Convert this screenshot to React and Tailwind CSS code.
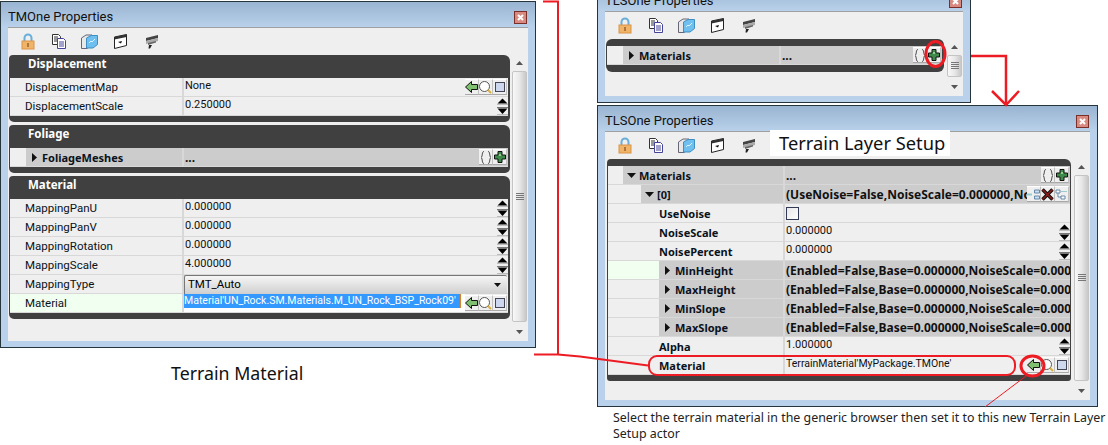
import React from 'react';

const UI_FONT = "font-['Roboto',sans-serif]";
const BOLD_FONT = "font-['Noto_Sans',sans-serif] font-bold";
const BOLD_VALUE = "font-['Noto_Sans',sans-serif] font-bold text-[12px] leading-[20px]";

// toolbar icons
const LockIcon = () => (
  <svg width="14" height="17" viewBox="0 0 14 17">
    <path d="M3.500 8V5a3.500 3.500 0 0 1 7 0v3" fill="none" stroke="#6aaedc" strokeWidth="2" />
    <rect x="1" y="8" width="12" height="8" fill="#f0b468" stroke="#dc9448" />
    <rect x="6" y="10" width="2" height="4" fill="#b0763a" />
  </svg>
);

const CopyIcon = () => (
  <svg width="16" height="15" viewBox="0 0 16 15">
    <path d="M1.500.5h6l2 2v8h-8z" fill="#fff" stroke="#333" />
    <path d="M3 3h4M3 5h4M3 7h4" stroke="#333" />
    <path d="M6.500 4.500h6l2 2v8h-8z" fill="#fff" stroke="#44449a" />
    <path d="M8 8h5M8 10h5M8 12h5" stroke="#44449a" />
  </svg>
);

const CubeIcon = () => (
  <svg width="17" height="15" viewBox="0 0 17 15">
    <path d="M.5 4 5 1h6v10l-5 3.500H.5z" fill="#e8e8e8" stroke="#667" />
    <path d="M5.500 4 10 1.500h6.500v9L12 14H5.500z" fill="#6fc0ee" stroke="#3d8fc4" />
    <path d="M8 9l2-2 1 1 3-3" fill="none" stroke="#d8f2ff" />
  </svg>
);

const BoxIcon = () => (
  <svg width="13" height="15" viewBox="0 0 13 15">
    <path d="M.5 3 12.500.5v11L.5 14.500z" fill="#fff" stroke="#222" />
    <path d="M.5 3 12.500.5V3L.5 5.500z" fill="#333" />
    <path d="M4 8l4-1-1 2.500z" fill="#111" />
  </svg>
);

const FilmIcon = () => (
  <svg width="14" height="14" viewBox="0 0 14 14">
    <path d="M1 3 13 0v3L1 6z" fill="#444" />
    <path d="M1 6 13 3v3L1 9z" fill="#aaa" />
    <path d="M3 8 11 6v1.500L3 10z" fill="#666" />
    <path d="M4 10h3l-2 3.500H3.500z" fill="#222" />
  </svg>
);

// row button icons
const IconBtn = ({ children }) => (
  <span className="w-[14px] h-[16px] shrink-0 flex items-center justify-center bg-[#efefef] border-t border-t-white border-b border-b-[#a8a8a8] border-r border-r-[#c0c0c0]">
    {children}
  </span>
);

const ArrowBtn = () => (
  <IconBtn>
    <svg className="shrink-0" width="13" height="12" viewBox="0 0 13 12">
      <path d="M.5 6 6.500.5v3h6v5h-6v3z" fill="#7fbf70" stroke="#111" />
    </svg>
  </IconBtn>
);

const FindBtn = () => (
  <IconBtn>
    <svg className="shrink-0" width="13" height="13" viewBox="0 0 13 13">
      <circle cx="5.500" cy="5.500" r="5" fill="#fff" stroke="#555" />
      <path d="M9 9l3 3" stroke="#d8b040" strokeWidth="2" />
    </svg>
  </IconBtn>
);

const ClearBtn = () => (
  <IconBtn>
    <span className="block w-[10px] h-[10px] bg-[#cdd8ee] border border-[#445]" />
  </IconBtn>
);

const BracesBtn = () => (
  <IconBtn>
    <svg className="shrink-0" width="12" height="13" viewBox="0 0 12 13">
      <path d="M4 .5C1.500.5 3 5.500 1 6.500c2 1 .5 6 3 6M8 .5c2.500 0 1 5 3 6-2 1-.5 6-3 6" fill="none" stroke="#444" />
    </svg>
  </IconBtn>
);

const PlusBtn = () => (
  <IconBtn>
    <svg className="shrink-0" width="12" height="12" viewBox="0 0 12 12">
      <path d="M4 .5h4V4h3.500v4H8v3.500H4V8H.5V4H4z" fill="#3f8a4a" stroke="#111" />
      <path d="M5 3h2v2H5z" fill="#8ed08f" />
    </svg>
  </IconBtn>
);

const InsertBtn = () => (
  <IconBtn>
    <svg className="shrink-0" width="13" height="11" viewBox="0 0 13 11">
      <path d="M0 5.500h5" stroke="#9cc" strokeWidth="2" />
      <path d="M7.500 1h5v3h-5zM7.500 7h5v3h-5z" fill="#cde" stroke="#68a" />
    </svg>
  </IconBtn>
);

const DeleteBtn = () => (
  <IconBtn>
    <svg className="shrink-0" width="13" height="13" viewBox="0 0 13 13">
      <path d="M1.500 1.500l10 10M11.500 1.500l-10 10" stroke="#111" strokeWidth="3.500" />
      <path d="M1.500 1.500l10 10M11.500 1.500l-10 10" stroke="#8a1c1c" strokeWidth="1.500" />
    </svg>
  </IconBtn>
);

const DupBtn = () => (
  <IconBtn>
    <svg className="shrink-0" width="13" height="11" viewBox="0 0 13 11">
      <path d="M1 1h4v3H1zM3 4v4h3M6 7h4v3H6z" fill="#fff" stroke="#68a" />
      <path d="M6 2.500h6" stroke="#9cc" />
    </svg>
  </IconBtn>
);

const Spinner = () => (
  <svg className="shrink-0" width="11" height="19" viewBox="0 0 11 19">
    <path d="M5.500 1.500 10.500 6.500H.5z" fill="#000" />
    <path d="M0 7.500h11M0 17.500h11" stroke="#bbb" />
    <path d="M.5 11.500h10l-5 5.500z" fill="#000" />
    <path d="M0 10.500h11" stroke="#777" />
  </svg>
);

const Tri = ({ down }) =>
  down ? (
    <svg className="shrink-0" width="9" height="5" viewBox="0 0 9 5"><path d="M0 0h9L4.500 5z" fill="#111" /></svg>
  ) : (
    <svg className="shrink-0" width="5" height="9" viewBox="0 0 5 9"><path d="M0 0l5 4.500L0 9z" fill="#111" /></svg>
  );

// one property row, label cell + value cell
const Row = ({ label, value, labelW, group, bold, indent = '', tri, triDown, triBox = '', right, green, valueClass = '', children }) => (
  <div className={`h-[19px] flex shrink-0 border-b border-[#d8d8d8] bg-[#efefef] ${UI_FONT}`}>
    <div className={`${labelW} shrink-0 flex ${green ? 'bg-[#f0fff0]' : ''} border-r-2 border-[#d8d8d8]`}>
      <div className={`${indent} shrink-0`} />
      <div className={`flex-1 flex items-center min-w-0 ${group ? 'bg-[#cccccc]' : ''}`}>
        {tri && <div className={`${triBox} shrink-0 flex justify-center`}><Tri down={triDown} /></div>}
        <span className={`leading-[19px] pt-px whitespace-nowrap text-[#0a1220] ${bold ? `text-[11px] ${BOLD_FONT}` : 'text-[11.500px]'}`}>{label}</span>
      </div>
    </div>
    <div className={`flex-1 min-w-0 flex items-center ${group ? 'bg-[#cccccc]' : ''}`}>
      {children || (
        <span className={`flex-1 min-w-0 overflow-hidden whitespace-nowrap pl-px self-start text-[#111] ${valueClass || 'text-[11px] leading-[16px]'}`}>{value}</span>
      )}
      {right}
    </div>
  </div>
);

const PickerBtns = () => (
  <div className="flex shrink-0 pr-px">
    <ArrowBtn />
    <FindBtn />
    <ClearBtn />
  </div>
);

const ArrayBtns = () => (
  <div className="flex shrink-0 pr-px">
    <BracesBtn />
    <PlusBtn />
  </div>
);

const Category = ({ title, children }) => (
  <div className="bg-[#404040] rounded-tr-[6px] rounded-tl-[4px] rounded-b-[5px] pl-px pr-[2px] pb-[6px]">
    <div className={`h-[23px] text-white text-[11.500px] leading-[17px] pl-[18px] ${BOLD_FONT}`}>{title}</div>
    {children}
  </div>
);

const Scrollbar = () => (
  <div className="w-[15px] shrink-0 flex flex-col">
    <div className="h-[16px] shrink-0 flex items-center justify-center">
      <svg width="7" height="4" viewBox="0 0 7 4"><path d="M3.500 0 7 4H0z" fill="#555" /></svg>
    </div>
    <div className="flex-1 flex items-center justify-center rounded-[2px] border border-[#c4c4c4] bg-gradient-to-r from-[#f8f8f8] via-[#e8e8e8] to-[#c8c8c8]">
      <svg width="8" height="8" viewBox="0 0 8 8"><path d="M0 .5h8M0 2.500h8M0 4.500h8M0 6.500h8" stroke="#777" /></svg>
    </div>
    <div className="h-[19px] shrink-0 flex items-center justify-center">
      <svg width="7" height="4" viewBox="0 0 7 4"><path d="M0 0h7L3.500 4z" fill="#555" /></svg>
    </div>
  </div>
);

const Toolbar = () => (
  <div className="h-[27px] shrink-0 flex items-center pl-[4px]">
    <span className="w-[31px] flex justify-center"><LockIcon /></span>
    <span className="w-[31px] flex justify-center"><CopyIcon /></span>
    <span className="w-[31px] flex justify-center"><CubeIcon /></span>
    <span className="w-[31px] flex justify-center"><BoxIcon /></span>
    <span className="w-[31px] flex justify-center"><FilmIcon /></span>
  </div>
);

const Win = ({ title, className, children, panelClass = 'pl-px' }) => (
  <div className={`absolute flex flex-col border border-[#26343c] bg-[#b9d1ea] ${className}`}>
    <div className={`h-[25px] shrink-0 flex items-center pl-[7px] pr-[8px] bg-gradient-to-b from-[#99b4d1] to-[#b9d1ea] text-[13px] text-[#111] ${UI_FONT}`}>
      <span className="pt-[5px]">{title}</span>
      <span className="ml-auto mt-[6px] w-[13px] h-[13px] flex items-center justify-center bg-[#d98a80] border border-[#7a3028] text-white">
        <svg width="7" height="7" viewBox="0 0 7 7"><path d="M1 1l5 5M6 1 1 6" stroke="#fff" strokeWidth="2" /></svg>
      </span>
    </div>
    <div className="flex-1 min-h-0 mx-[7px] mb-[6px] flex flex-col bg-[#efefef] border-t border-[#a0a0a0]">
      <Toolbar />
      <div className={`flex-1 min-h-0 flex gap-[2px] pr-px ${panelClass}`}>
        <div className="flex-1 min-w-0 flex flex-col gap-[3px]">{children}</div>
        <Scrollbar />
      </div>
    </div>
  </div>
);

const L1 = 'w-[174px]';
const L3 = 'w-[177px]';

const TerrainMaterialWindow = () => (
  <Win title="TMOne Properties" className="left-0 top-px w-[536px] h-[347px]">
    <Category title="Displacement">
      <Row labelW={L1} indent="w-[15px]" label="DisplacementMap" value="None" right={<PickerBtns />} />
      <Row labelW={L1} indent="w-[15px]" label="DisplacementScale" value="0.250000" right={<Spinner />} />
    </Category>
    <Category title="Foliage">
      <Row labelW={L1} indent="w-[16px]" group bold tri triBox="w-[16px]" label="FoliageMeshes" value="..." valueClass={BOLD_VALUE} right={<ArrayBtns />} />
    </Category>
    <Category title="Material">
      <Row labelW={L1} indent="w-[15px]" label="MappingPanU" value="0.000000" right={<Spinner />} />
      <Row labelW={L1} indent="w-[15px]" label="MappingPanV" value="0.000000" right={<Spinner />} />
      <Row labelW={L1} indent="w-[15px]" label="MappingRotation" value="0.000000" right={<Spinner />} />
      <Row labelW={L1} indent="w-[15px]" label="MappingScale" value="4.000000" right={<Spinner />} />
      <Row labelW={L1} indent="w-[15px]" label="MappingType">
        <div className="flex-1 h-[19px] flex items-center justify-between pl-[3px] pr-[6px] mr-px rounded-t-[2px] border-t border-l border-[#777] bg-gradient-to-b from-[#f6f6f6] to-[#cfcfcf] text-[11.500px]">
          <span className="pt-px">TMT_Auto</span>
          <svg width="7" height="4" viewBox="0 0 7 4"><path d="M0 0h7L3.500 4z" fill="#111" /></svg>
        </div>
      </Row>
      <Row labelW={L1} indent="w-[15px]" green label="Material" right={<PickerBtns />}>
        <div className="flex-1 min-w-0 h-[18px] flex items-start bg-white text-[10.500px] leading-[14px]">
          <span className="bg-[#3399ff] text-white whitespace-nowrap w-[277px] border-r border-[#e08020]">Material'UN_Rock.SM.Materials.M_UN_Rock_BSP_Rock09'</span>
        </div>
      </Row>
    </Category>
  </Win>
);

const LayerSmallWindow = () => (
  <Win title="TLSOne Properties" className="left-[597px] -top-[15px] w-[374px] h-[118px]">
    <div className="bg-[#404040] rounded-[6px] pl-px pr-[2px] pt-[7px] pb-[7px] mr-px">
      <Row labelW={L1} indent="w-[16px]" group bold tri triBox="w-[16px]" label="Materials" value="..." valueClass={BOLD_VALUE} right={<ArrayBtns />} />
    </div>
  </Win>
);

const LayerWindow = () => (
  <Win title="TLSOne Properties" className="left-[597px] top-[105px] w-[501px] h-[302px]" panelClass="pl-[2px]">
    <div className="bg-[#404040] rounded-tr-[6px] rounded-tl-[4px] rounded-b-[3px] pl-px pr-[1px] pt-[7px] pb-[6px] mr-px">
      <Row labelW={L3} indent="w-[15px]" group bold tri triDown triBox="w-[16px]" label="Materials" value="..." valueClass={BOLD_VALUE} right={<ArrayBtns />} />
      <Row labelW={L3} indent="w-[33px]" group bold tri triDown triBox="w-[16px]" label="[0]" value="(UseNoise=False,NoiseScale=0.000000,NoisePercent=0.000000)" valueClass={BOLD_VALUE} right={<div className="flex shrink-0 pr-px"><InsertBtn /><DeleteBtn /><DupBtn /></div>} />
      <Row labelW={L3} indent="w-[51px]" bold label="UseNoise">
        <span className="ml-[1px] w-[13px] h-[13px] border border-[#333a55] bg-gradient-to-br from-[#e8e8e8] to-white" />
      </Row>
      <Row labelW={L3} indent="w-[51px]" bold label="NoiseScale" value="0.000000" right={<Spinner />} />
      <Row labelW={L3} indent="w-[51px]" bold label="NoisePercent" value="0.000000" right={<Spinner />} />
      <Row labelW={L3} indent="w-[51px]" green group bold tri triBox="w-[16px]" label="MinHeight" value="(Enabled=False,Base=0.000000,NoiseScale=0.000000,NoisePercent=0.000000)" valueClass={BOLD_VALUE} />
      <Row labelW={L3} indent="w-[51px]" group bold tri triBox="w-[16px]" label="MaxHeight" value="(Enabled=False,Base=0.000000,NoiseScale=0.000000,NoisePercent=0.000000)" valueClass={BOLD_VALUE} />
      <Row labelW={L3} indent="w-[51px]" group bold tri triBox="w-[16px]" label="MinSlope" value="(Enabled=False,Base=0.000000,NoiseScale=0.000000,NoisePercent=0.000000)" valueClass={BOLD_VALUE} />
      <Row labelW={L3} indent="w-[51px]" group bold tri triBox="w-[16px]" label="MaxSlope" value="(Enabled=False,Base=0.000000,NoiseScale=0.000000,NoisePercent=0.000000)" valueClass={BOLD_VALUE} />
      <Row labelW={L3} indent="w-[51px]" bold label="Alpha" value="1.000000" right={<Spinner />} />
      <Row labelW={L3} indent="w-[51px]" bold label="Material" value="TerrainMaterial'MyPackage.TMOne'" valueClass="text-[10.500px] leading-[16px]" right={<PickerBtns />} />
    </div>
  </Win>
);

// red hand drawn markup over the screenshots
const Markup = () => (
  <svg className="absolute inset-0 pointer-events-none" width="1108" height="445" viewBox="0 0 1108 445" fill="none" stroke="#ed1c24" strokeWidth="2">
    <path d="M543 1.500h15V354" />
    <path d="M534 354.500h24l22 2 68 9" />
    <path d="M971 56h35v48" strokeWidth="2.500" />
    <path d="M992 91l14 14 13-14" strokeWidth="2.500" />
    <ellipse cx="935.500" cy="54" rx="9.500" ry="12.500" strokeWidth="3" />
    <rect x="649" y="356" width="366" height="19" rx="8" strokeWidth="2" />
    <ellipse cx="1032.500" cy="366" rx="11.500" ry="10" strokeWidth="3" />
    <path d="M1026 376 985 407" strokeWidth="1" />
  </svg>
);

export default function App() {
  return (
    <div className="relative w-[1108px] h-[445px] overflow-hidden bg-white text-black">
      <TerrainMaterialWindow />
      <LayerSmallWindow />
      <LayerWindow />
      <div className="absolute left-[770px] top-[130px] w-[180px] h-[26px] bg-white pl-[9px] text-[18.300px] leading-[26px] text-[#111] whitespace-nowrap font-['Noto_Sans',sans-serif]">
        Terrain Layer Setup
      </div>
      <Markup />
      <div className="absolute left-[171px] top-[361px] text-[17.800px] leading-[24px] text-[#111] whitespace-nowrap font-['Noto_Sans',sans-serif]">
        Terrain Material
      </div>
      <p className="absolute left-[613px] top-[410px] w-[495px] text-[12.400px] leading-[16px] text-[#222] font-['Noto_Sans',sans-serif]">
        Select the terrain material in the generic browser then set it to this new Terrain Layer Setup actor
      </p>
    </div>
  );
}
